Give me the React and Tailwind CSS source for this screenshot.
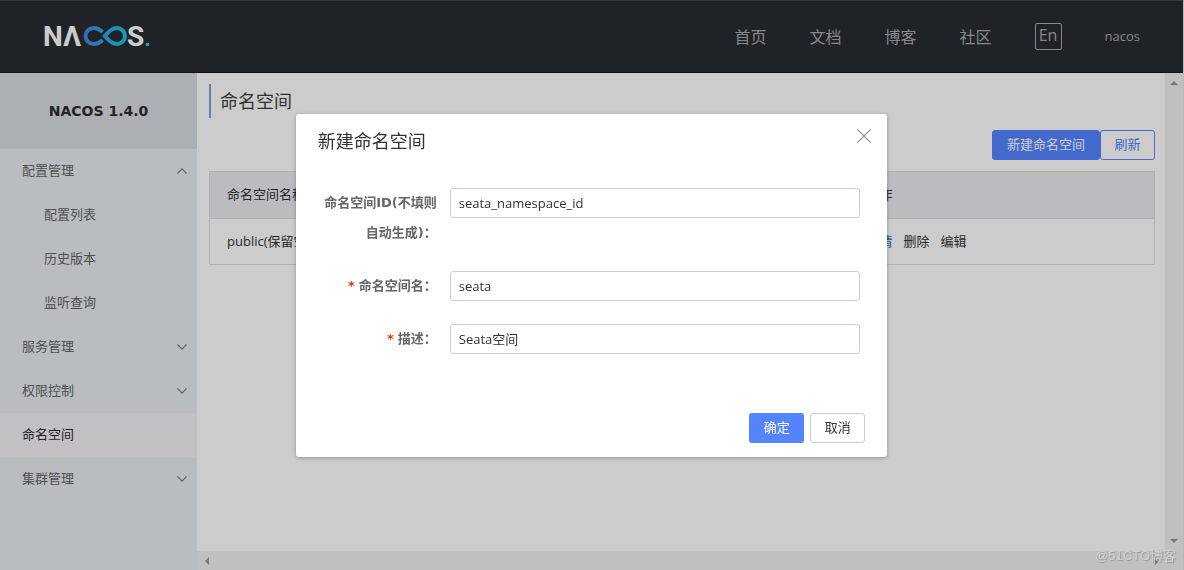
import React, { useState } from "react";

const menuItems = [
  { name: "配置管理", children: ["配置列表", "历史版本", "监听查询"] },
  { name: "服务管理", closed: true },
  { name: "权限控制", closed: true },
  { name: "命名空间", active: true },
  { name: "集群管理", closed: true },
];

const Chevron = ({ up }) => (
  <svg
    className="w-[10px] h-[6px]"
    viewBox="0 0 10 6"
    fill="none"
    stroke="#7c7c7c"
    strokeWidth="1.1"
    aria-hidden="true"
  >
    <path d={up ? "M0.5 5.5L5 0.8L9.5 5.5" : "M0.5 0.5L5 5.2L9.5 0.5"} />
  </svg>
);

const Logo = () => (
  <a href="#" aria-label="Nacos" className="block">
    <svg className="w-[110px] h-[70px]" viewBox="0 0 110 70">
      <defs>
        <linearGradient id="loop" gradientUnits="userSpaceOnUse" x1="40" y1="0" x2="84" y2="0">
          <stop offset="0" stopColor="#4583e8" />
          <stop offset="1" stopColor="#1cc8d8" />
        </linearGradient>
      </defs>
      <g fill="#fff" fontFamily="Roboto, sans-serif" fontWeight="700" fontSize="28">
        <text x="0" y="44">N</text>
        <text x="20" y="44">Λ</text>
        <text x="84" y="44">S</text>
      </g>
      <g fill="none" stroke="url(#loop)" strokeWidth="4">
        <path d="M59.5 30.2C57 27.400 54 26 50.500 26A8 8 0 0 0 50.500 42C54 42 57 40.600 59.500 37.800" />
        <path d="M61.800 34C65.500 29.500 69 26 74 26A8 8 0 0 1 74 42C69 42 65.500 38.500 61.800 34Z" />
      </g>
      <circle cx="104.500" cy="42.400" r="1.900" fill="#1cc8d8" />
    </svg>
  </a>
);

const Header = () => (
  <header className="flex items-center justify-between h-[73px] shrink-0 pl-[43px] pr-[43px] bg-[#272b30] border-t border-t-[#484848] border-b border-b-[#15181b]">
    <Logo />
    <nav className="flex items-center gap-[43px] text-base text-[#a9aaac]">
      <a href="#">首页</a>
      <a href="#">文档</a>
      <a href="#">博客</a>
      <a href="#">社区</a>
      <button className="w-[27px] h-[27px] pb-1 leading-5 border border-[#a9aaac] rounded-xs">En</button>
      <a href="#" className="text-[13px]">nacos</a>
    </nav>
  </header>
);

const Sidebar = () => (
  <aside className="w-[197px] shrink-0 bg-[#e8edf0] text-[#636567]">
    <h1 className="flex items-center justify-center h-[76px] bg-[#d8dce1] text-sm font-bold text-[#2c2c2c] font-['DejaVu_Sans',sans-serif]">
      NACOS 1.4.0
    </h1>
    <ul>
      {menuItems.map((item) => (
        <li key={item.name}>
          <a
            href="#"
            className={`flex items-center justify-between h-11 pl-[22px] pr-[10px] ${
              item.active ? "bg-[#f4f1f6] text-[#2c2c2c]" : ""
            }`}
          >
            {item.name}
            {item.children && <Chevron up />}
            {item.closed && <Chevron />}
          </a>
          {item.children && (
            <ul>
              {item.children.map((child) => (
                <li key={child}>
                  <a href="#" className="flex items-center h-11 pl-11">{child}</a>
                </li>
              ))}
            </ul>
          )}
        </li>
      ))}
    </ul>
  </aside>
);

const NamespaceTable = () => (
  <table className="w-full mt-[11px] table-fixed border border-[#dcdee3] text-left text-[#333]">
    <thead>
      <tr className="h-[47px] bg-[#ebecf0] border-b border-[#dcdee3]">
        <th className="pl-[17px] font-normal">命名空间名称</th>
        <th className="pl-[17px] font-normal">命名空间ID</th>
        <th className="pl-[17px] font-normal">配置数</th>
        <th className="w-[305px] pl-[17px] font-normal">操作</th>
      </tr>
    </thead>
    <tbody>
      <tr className="h-[46px]">
        <td className="pl-[17px]">public(保留空间)</td>
        <td className="pl-[17px]"></td>
        <td className="pl-[17px]">0</td>
        <td className="pl-[17px]">
          <div className="flex gap-[11px]">
            <a href="#" className="text-[#1f71cc]">详情</a>
            <a href="#">删除</a>
            <a href="#">编辑</a>
          </div>
        </td>
      </tr>
    </tbody>
  </table>
);

const Arrow = ({ points }) => (
  <svg className="w-2 h-2" viewBox="0 0 8 8" fill="#979797" aria-hidden="true">
    <polygon points={points} />
  </svg>
);

const Content = () => (
  <div className="flex flex-col flex-1 min-w-0">
    <div className="flex flex-1">
      <main className="flex-1 min-w-0 pt-[11px] pl-3 pr-[10px]">
        <h2 className="h-[34px] pl-[9px] border-l-2 border-[#73a5cc] text-lg leading-[34px] text-[#3d3d3d]">
          命名空间
        </h2>
        <div className="flex justify-end mt-3">
          <button className="h-[30px] px-[14px] rounded-[3px] border border-[#5584ff] bg-[#5584ff] text-white">
            新建命名空间
          </button>
          <button className="w-[55px] h-[30px] rounded-[3px] border border-[#5584ff] text-[#5584ff]">
            刷新
          </button>
        </div>
        <NamespaceTable />
      </main>
      <div className="flex flex-col items-center justify-between w-[18px] py-[6px] bg-[#f1f1f1]">
        <Arrow points="0,6 4,2 8,6" />
        <Arrow points="0,2 4,6 8,2" />
      </div>
    </div>
    <div className="flex items-center justify-between h-[19px] pl-[6px] pr-[22px] bg-[#f1f1f1]">
      <Arrow points="6,0 2,4 6,8" />
      <Arrow points="2,0 6,4 2,8" />
    </div>
  </div>
);

const Field = ({ id, label, required, value, onChange }) => (
  <div className="flex items-start gap-[13px]">
    <label
      htmlFor={id}
      className="w-[119px] shrink-0 text-right font-bold leading-[30px] text-[#666] font-['DejaVu_Sans','Noto_Sans_CJK_SC',sans-serif]"
    >
      {required && <span className="mr-1 text-[#ff3000]">*</span>}
      {label}
    </label>
    <input
      id={id}
      type="text"
      value={value}
      onChange={onChange}
      className="flex-1 min-w-0 h-[30px] px-2 border border-[#cbccd6] rounded-[3px] text-[#333] outline-none"
    />
  </div>
);

const NewNamespaceDialog = () => {
  const [form, setForm] = useState({
    id: "seata_namespace_id",
    name: "seata",
    desc: "Seata空间",
  });

  const update = (key) => (e) => setForm({ ...form, [key]: e.target.value });

  return (
    <div className="fixed inset-0 flex items-center justify-center pr-px bg-black/20">
      <form
        role="dialog"
        aria-labelledby="dialog-title"
        className="w-1/2 pb-[14px] rounded-[3px] bg-white shadow-[0_1px_4px_rgba(0,0,0,0.3)]"
      >
        <div className="flex items-center justify-between h-[54px] pl-[22px] pr-4">
          <h2 id="dialog-title" className="text-lg text-[#333]">新建命名空间</h2>
          <button type="button" aria-label="关闭" className="pb-[10px]">
            <svg className="w-[14px] h-[14px]" viewBox="0 0 14 14" stroke="#999" strokeWidth="1.2">
              <path d="M0.5 0.5L13.500 13.500M13.500 0.500L0.500 13.500" />
            </svg>
          </button>
        </div>
        <div className="flex flex-col gap-[23px] pt-5 pl-[22px] pr-[27px]">
          <Field id="ns-id" label="命名空间ID(不填则自动生成)：" value={form.id} onChange={update("id")} />
          <Field id="ns-name" label="命名空间名：" required value={form.name} onChange={update("name")} />
          <Field id="ns-desc" label="描述：" required value={form.desc} onChange={update("desc")} />
        </div>
        <div className="flex justify-end gap-[6px] mt-[59px] px-[22px]">
          <button type="button" className="w-[55px] h-[30px] rounded-[3px] bg-[#5584ff] text-white">
            确定
          </button>
          <button type="button" className="w-[55px] h-[30px] rounded-[3px] border border-[#cbccd6] text-[#333]">
            取消
          </button>
        </div>
      </form>
    </div>
  );
};

const App = () => {
  return (
    <div className="flex flex-col min-h-screen bg-white border-r border-[#e5e5e5] text-[13px] font-['Open_Sans','Noto_Sans_CJK_SC',sans-serif]">
      <Header />
      <div className="flex flex-1">
        <Sidebar />
        <Content />
      </div>
      <NewNamespaceDialog />
      <span className="fixed right-2 bottom-[6px] text-[13px] leading-4 text-[#cfcfcf] font-['Liberation_Sans','Noto_Sans_CJK_SC',sans-serif] [text-shadow:1px_1px_1px_#999]">
        @51CTO博客
      </span>
    </div>
  );
};

export default App;
